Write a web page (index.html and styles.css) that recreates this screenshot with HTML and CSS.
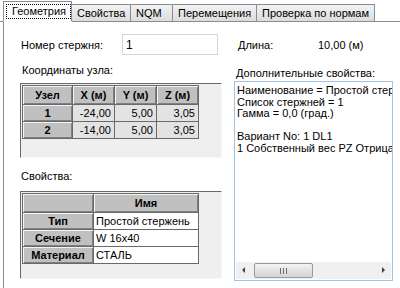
FILE: index.html
```html
<!DOCTYPE html>
<html lang="ru">
<head>
    <meta charset="UTF-8">
    <title>Геометрия</title>
    <link rel="stylesheet" href="styles.css">
</head>
<body>
    <div class="tabs">
        <div class="tab tab-active"><span class="focus">Геометрия</span></div>
        <div class="tab tab-props">Свойства</div>
        <div class="tab tab-nqm">NQM</div>
        <div class="tab tab-move">Перемещения</div>
        <div class="tab tab-check">Проверка по нормам</div>
    </div>

    <div class="page">
        <div class="col-left">
            <div class="field-row">
                <span class="field-label">Номер стержня:</span>
                <div class="input">1</div>
            </div>

            <div class="caption caption-coords">Координаты узла:</div>
            <div class="grid grid-coords">
                <table>
                    <thead>
                        <tr>
                            <th class="c-node">Узел</th>
                            <th class="c-num">X (м)</th>
                            <th class="c-num">Y (м)</th>
                            <th class="c-num">Z (м)</th>
                        </tr>
                    </thead>
                    <tbody>
                        <tr>
                            <th>1</th>
                            <td>-24,00</td>
                            <td>5,00</td>
                            <td>3,05</td>
                        </tr>
                        <tr>
                            <th>2</th>
                            <td>-14,00</td>
                            <td>5,00</td>
                            <td>3,05</td>
                        </tr>
                    </tbody>
                </table>
            </div>

            <div class="caption caption-props">Свойства:</div>
            <div class="grid grid-props">
                <table>
                    <thead>
                        <tr>
                            <th class="c-key"></th>
                            <th class="c-val">Имя</th>
                        </tr>
                    </thead>
                    <tbody>
                        <tr>
                            <th>Тип</th>
                            <td>Простой стержень</td>
                        </tr>
                        <tr>
                            <th>Сечение</th>
                            <td>W 16x40</td>
                        </tr>
                        <tr>
                            <th>Материал</th>
                            <td>СТАЛЬ</td>
                        </tr>
                    </tbody>
                </table>
            </div>
        </div>

        <div class="col-right">
            <div class="length-row">
                <span class="length-label">Длина:</span>
                <span class="length-value">10,00 (м)</span>
            </div>

            <div class="caption caption-extra">Дополнительные свойства:</div>
            <div class="memo">
                <div class="memo-text">
                    <div>Наименование = Простой стержень</div>
                    <div>Список стержней = 1</div>
                    <div>Гамма = 0,0 (град.)</div>
                    <div>&nbsp;</div>
                    <div>Вариант No: 1 DL1</div>
                    <div>1 Собственный вес PZ Отрицательное</div>
                </div>
                <div class="hscroll">
                    <span class="arrow arrow-left"></span>
                    <div class="track">
                        <div class="thumb"><span class="grip"></span></div>
                    </div>
                    <span class="arrow arrow-right"></span>
                </div>
            </div>
        </div>
    </div>
</body>
</html>
```

FILE: styles.css
```css
* {
    margin: 0;
    padding: 0;
    box-sizing: border-box;
}

body {
    font-family: 'Liberation Sans', Arial, sans-serif;
    font-size: 11px;
    color: #000;
    background: #fff;
    width: 400px;
    height: 288px;
    overflow: hidden;
}

/* Tabs */
.tabs {
    display: flex;
    align-items: flex-end;
    height: 22px;
    padding-left: 3px;
    border-bottom: 1px solid #898c95;
}

.tab {
    height: 18px;
    margin-bottom: -1px;
    border: 1px solid #898c95;
    border-left: none;
    background: linear-gradient(#f2f2f2, #dcdcdc);
    line-height: 16px;
    padding-left: 5px;
    white-space: nowrap;
}

.tab-active {
    width: 69px;
    height: 21px;
    background: #fff;
    border-left: 1px solid #898c95;
    border-bottom: 1px solid #fff;
    padding: 2px 0 0 2px;
    line-height: 14px;
}

.focus {
    display: inline-block;
    padding: 0 4px 0 5px;
    border: 1px dotted #000;
    height: 15px;
    line-height: 13px;
}

.tab-props { width: 59px; }
.tab-nqm { width: 42px; }
.tab-move { width: 84px; }
.tab-check { width: 118px; }

/* Page */
.page {
    display: flex;
    gap: 12px;
    height: 266px;
    margin-left: 3px;
    border-left: 1px solid #898c95;
    padding: 12px 0 0 16px;
}

.col-left {
    width: 202px;
}

.col-right {
    width: 159px;
}

.field-row {
    display: flex;
    align-items: center;
    height: 21px;
    padding-left: 1px;
}

.field-label {
    width: 101px;
}

.input {
    width: 96px;
    height: 21px;
    border: 1px solid #d4d4d4;
    background: #fff;
    padding: 3px 0 0 3px;
    font-size: 12px;
}

.caption {
    height: 13px;
    line-height: 13px;
    padding-left: 2px;
}

.caption-coords {
    margin-top: 9px;
    margin-bottom: 6px;
}

.caption-props {
    margin-top: 12px;
    margin-bottom: 8px;
    padding-left: 1px;
}

/* Grids */
.grid {
    background: #efefef;
    border: 1px solid #f7f7f7;
    border-top-color: #696969;
    border-left-color: #696969;
    padding: 1px 0 0 1px;
}

.grid-coords {
    height: 75px;
}

.grid-props {
    height: 88px;
}

table {
    border-collapse: collapse;
}

th, td {
    border: 1px solid #696969;
    height: 17px;
    padding: 0 3px;
    white-space: nowrap;
}

th {
    background: #c0c0c0;
    font-weight: bold;
    text-align: center;
    box-shadow: inset 1px 1px #f4f4f4, inset -1px -1px #808080;
}

thead th {
    height: 19px;
}

.grid-coords td {
    background: #e3e3e3;
    text-align: right;
}

.grid-props td {
    background: #fff;
    text-align: left;
    padding-left: 2px;
}

.c-node { width: 50px; }
.c-num { width: 42px; }
.c-key { width: 71px; }
.c-val { width: 105px; }

/* Right column */
.length-row {
    display: flex;
    align-items: center;
    height: 21px;
    padding-left: 4px;
}

.length-label {
    width: 80px;
}

.caption-extra {
    margin-top: 12px;
    margin-bottom: 1px;
}

.memo {
    height: 200px;
    border: 1px solid #a5c3e0;
    background: #fff;
    display: flex;
    flex-direction: column;
}

.memo-text {
    flex: 1;
    overflow: hidden;
    white-space: nowrap;
    padding: 3px 0 0 2px;
    line-height: 11.5px;
}

.hscroll {
    display: flex;
    align-items: center;
    height: 17px;
    margin: 0 1px 1px;
    background: #f0f0f0;
}

.arrow {
    width: 16px;
    height: 17px;
    position: relative;
}

.arrow::after {
    content: '';
    position: absolute;
    top: 5px;
    border-top: 3px solid transparent;
    border-bottom: 3px solid transparent;
}

.arrow-left::after {
    left: 6px;
    border-right: 3px solid #404040;
}

.arrow-right::after {
    left: 7px;
    border-left: 3px solid #404040;
}

.track {
    flex: 1;
    height: 17px;
    padding: 1px 0;
}

.thumb {
    width: 59px;
    height: 15px;
    margin-left: 2px;
    border: 1px solid #9a9a9a;
    border-radius: 2px;
    background: linear-gradient(#f4f4f4, #e2e2e2 50%, #d5d5d5);
    display: flex;
    align-items: center;
    justify-content: center;
}

.grip {
    width: 7px;
    height: 6px;
    border-left: 1px solid #6e6e6e;
    border-right: 1px solid #6e6e6e;
    position: relative;
}

.grip::after {
    content: '';
    position: absolute;
    left: 2px;
    top: 0;
    width: 1px;
    height: 6px;
    background: #6e6e6e;
}
```
